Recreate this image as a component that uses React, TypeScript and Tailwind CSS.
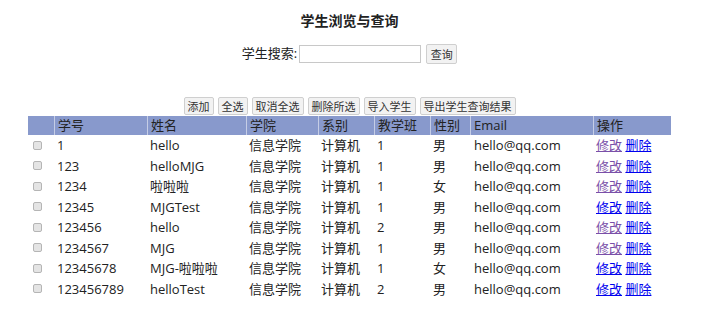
import * as React from 'react';

const rows = [
    { id: '1', name: 'hello', cls: '1', sex: '男', edited: true },
    { id: '123', name: 'helloMJG', cls: '1', sex: '男', edited: true },
    { id: '1234', name: '啦啦啦', cls: '1', sex: '女', edited: true },
    { id: '12345', name: 'MJGTest', cls: '1', sex: '男', edited: false },
    { id: '123456', name: 'hello', cls: '2', sex: '男', edited: true },
    { id: '1234567', name: 'MJG', cls: '1', sex: '男', edited: true },
    { id: '12345678', name: 'MJG-啦啦啦', cls: '1', sex: '女', edited: false },
    { id: '123456789', name: 'helloTest', cls: '2', sex: '男', edited: false },
];

const headers = ['学号', '姓名', '学院', '系别', '教学班', '性别', 'Email', '操作'];
const widths = ['w-[26px]', 'w-[93px]', 'w-[99px]', 'w-[72px]', 'w-[56px]', 'w-[56px]', 'w-[40px]', 'w-[123px]', 'w-[78px]'];

const tools = ['添加', '全选', '取消全选', '删除所选', '导入学生', '导出学生查询结果'];

export default function App() {
    return (
        <div className="min-h-[325px] bg-white text-[#222] font-['Open_Sans','Noto_Sans_CJK_SC',sans-serif]">
            <div className="ml-[28px] w-[643px] flex flex-col items-center">
                <h2 className="mt-[11px] h-[20px] leading-[20px] text-[14px] font-bold">学生浏览与查询</h2>

                <div className="mt-[13px] flex items-center h-[20px] text-[13px]">
                    <span>学生搜索:</span>
                    <input type="text" className="ml-[2px] w-[122px] h-[18px] border border-[#c8c8c8] bg-white" />
                    <button className="ml-[5px] h-[20px] w-[31px] text-[11px] leading-none text-[#333] border border-[#cfcfcf] rounded-[2px] bg-[#f2f2f2]">查询</button>
                </div>

                <div className="mt-[33px] flex gap-[4px]">
                    {tools.map(t => (
                        <button key={t} className="h-[18px] px-[3px] text-[11px] leading-none text-[#333] border border-[#cfcfcf] rounded-[2px] bg-[#f2f2f2]">{t}</button>
                    ))}
                </div>

                <table className="mt-[1px] w-[643px] table-fixed border-separate border-spacing-0 text-[13px]">
                    <thead>
                        <tr className="bg-[#8899cc]">
                            <th className={`${widths[0]} h-[19px] p-0`} />
                            {headers.map((h, i) => (
                                <th key={h} className={`${widths[i + 1]} h-[19px] pl-[3px] pt-0 pb-0 text-left font-normal leading-[19px] border-l border-[#c5cde6]`}>{h}</th>
                            ))}
                        </tr>
                    </thead>
                    <tbody>
                        {rows.map(r => (
                            <tr key={r.id} className="h-[20.5px] leading-[20px]">
                                <td className="p-0 pl-[5px] text-left">
                                    <input type="checkbox" className="appearance-none block w-[9px] h-[9px] border border-[#b5b5b5] rounded-[2px] bg-[#e4e4e4]" />
                                </td>
                                <td className="pl-[3px]">{r.id}</td>
                                <td className="pl-[3px]">{r.name}</td>
                                <td className="pl-[3px]">信息学院</td>
                                <td className="pl-[3px]">计算机</td>
                                <td className="pl-[3px]">{r.cls}</td>
                                <td className="pl-[3px]">{r.sex}</td>
                                <td className="pl-[4px]">hello@qq.com</td>
                                <td className="pl-[3px]">
                                    <a href="#" className={`underline ${r.edited ? 'text-[#7a4fa8]' : 'text-[#0000ee]'}`}>修改</a>{' '}
                                    <a href="#" className="underline text-[#0000ee]">删除</a>
                                </td>
                            </tr>
                        ))}
                    </tbody>
                </table>
            </div>
        </div>
    );
}
